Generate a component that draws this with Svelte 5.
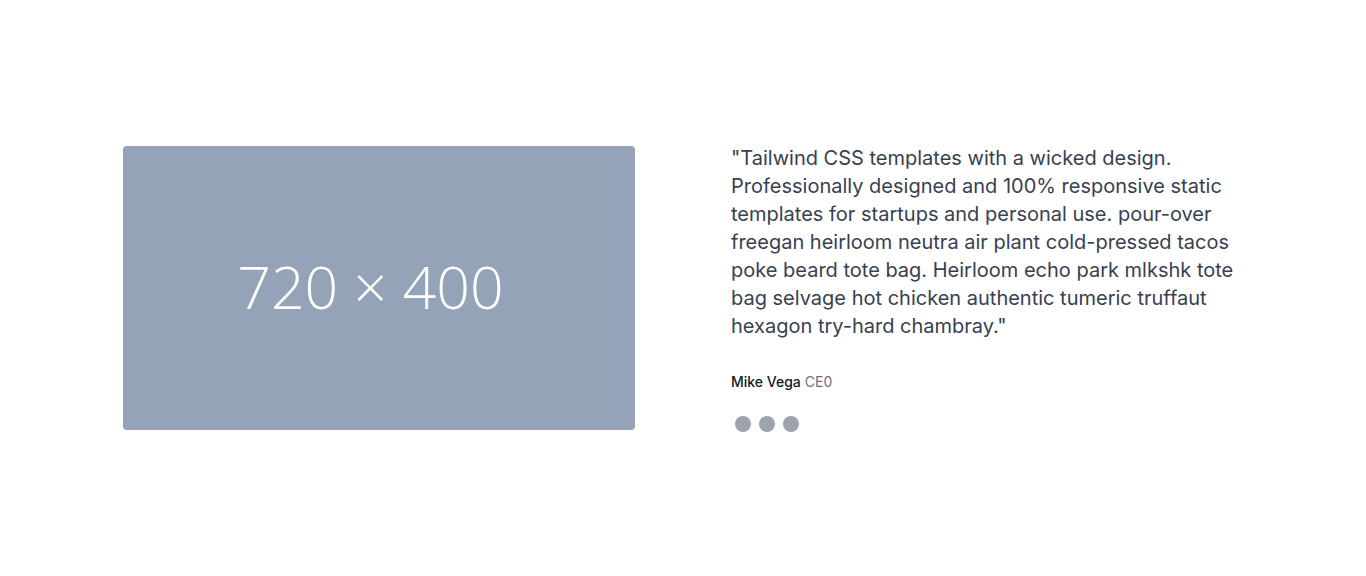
<script>
  const slides = [1, 2, 3];
</script>

<section>
  <div class="container">
    <div class="media">
      <svg viewBox="0 0 720 400" role="img" aria-label="Placeholder" preserveAspectRatio="xMidYMid slice">
        <text x="348" y="229" text-anchor="middle">720 × 400</text>
      </svg>
    </div>
    <div class="quote">
      <blockquote>"Tailwind CSS templates with a wicked design. Professionally designed and 100% responsive static templates for startups and personal use. pour-over freegan heirloom neutra air plant cold-pressed tacos poke beard tote bag. Heirloom echo park mlkshk tote bag selvage hot chicken authentic tumeric truffaut hexagon try-hard chambray."</blockquote>
      <p class="author"><strong>Mike Vega</strong> <span>CE0</span></p>
      <div class="dots">
        {#each slides as n}
          <button type="button" aria-label={`Testimonial ${n}`}></button>
        {/each}
      </div>
    </div>
  </div>
</section>

<style>
  :global(body) {
    margin: 0;
    background: #fff;
  }
  section {
    box-sizing: border-box;
    min-height: 100vh;
    display: flex;
    align-items: center;
    justify-content: center;
    font-family: Inter, "Noto Sans", sans-serif;
  }
  .container {
    box-sizing: border-box;
    width: 100%;
    max-width: 1280px;
    padding: 0 80px;
    display: grid;
    grid-template-columns: 1fr 1fr;
    column-gap: 96px;
    align-items: center;
  }
  .media {
    height: 284px;
    border-radius: 4px;
    overflow: hidden;
    background: #94a3b8;
  }
  svg {
    display: block;
    width: 100%;
    height: 100%;
  }
  text {
    font-family: "Open Sans", sans-serif;
    font-weight: 300;
    font-size: 83px;
    fill: #fff;
  }
  blockquote {
    margin: 0 0 32px;
    font-size: 20px;
    line-height: 28px;
    color: #374151;
  }
  .author {
    margin: 0 0 24px;
    font-size: 14px;
    line-height: 20px;
    color: #6b7280;
  }
  strong {
    font-weight: 500;
    color: #111827;
  }
  .dots {
    display: flex;
    gap: 8px;
    padding: 0 4px;
  }
  button {
    width: 16px;
    height: 16px;
    padding: 0;
    border: 0;
    border-radius: 50%;
    background: #9ca3af;
  }
</style>
